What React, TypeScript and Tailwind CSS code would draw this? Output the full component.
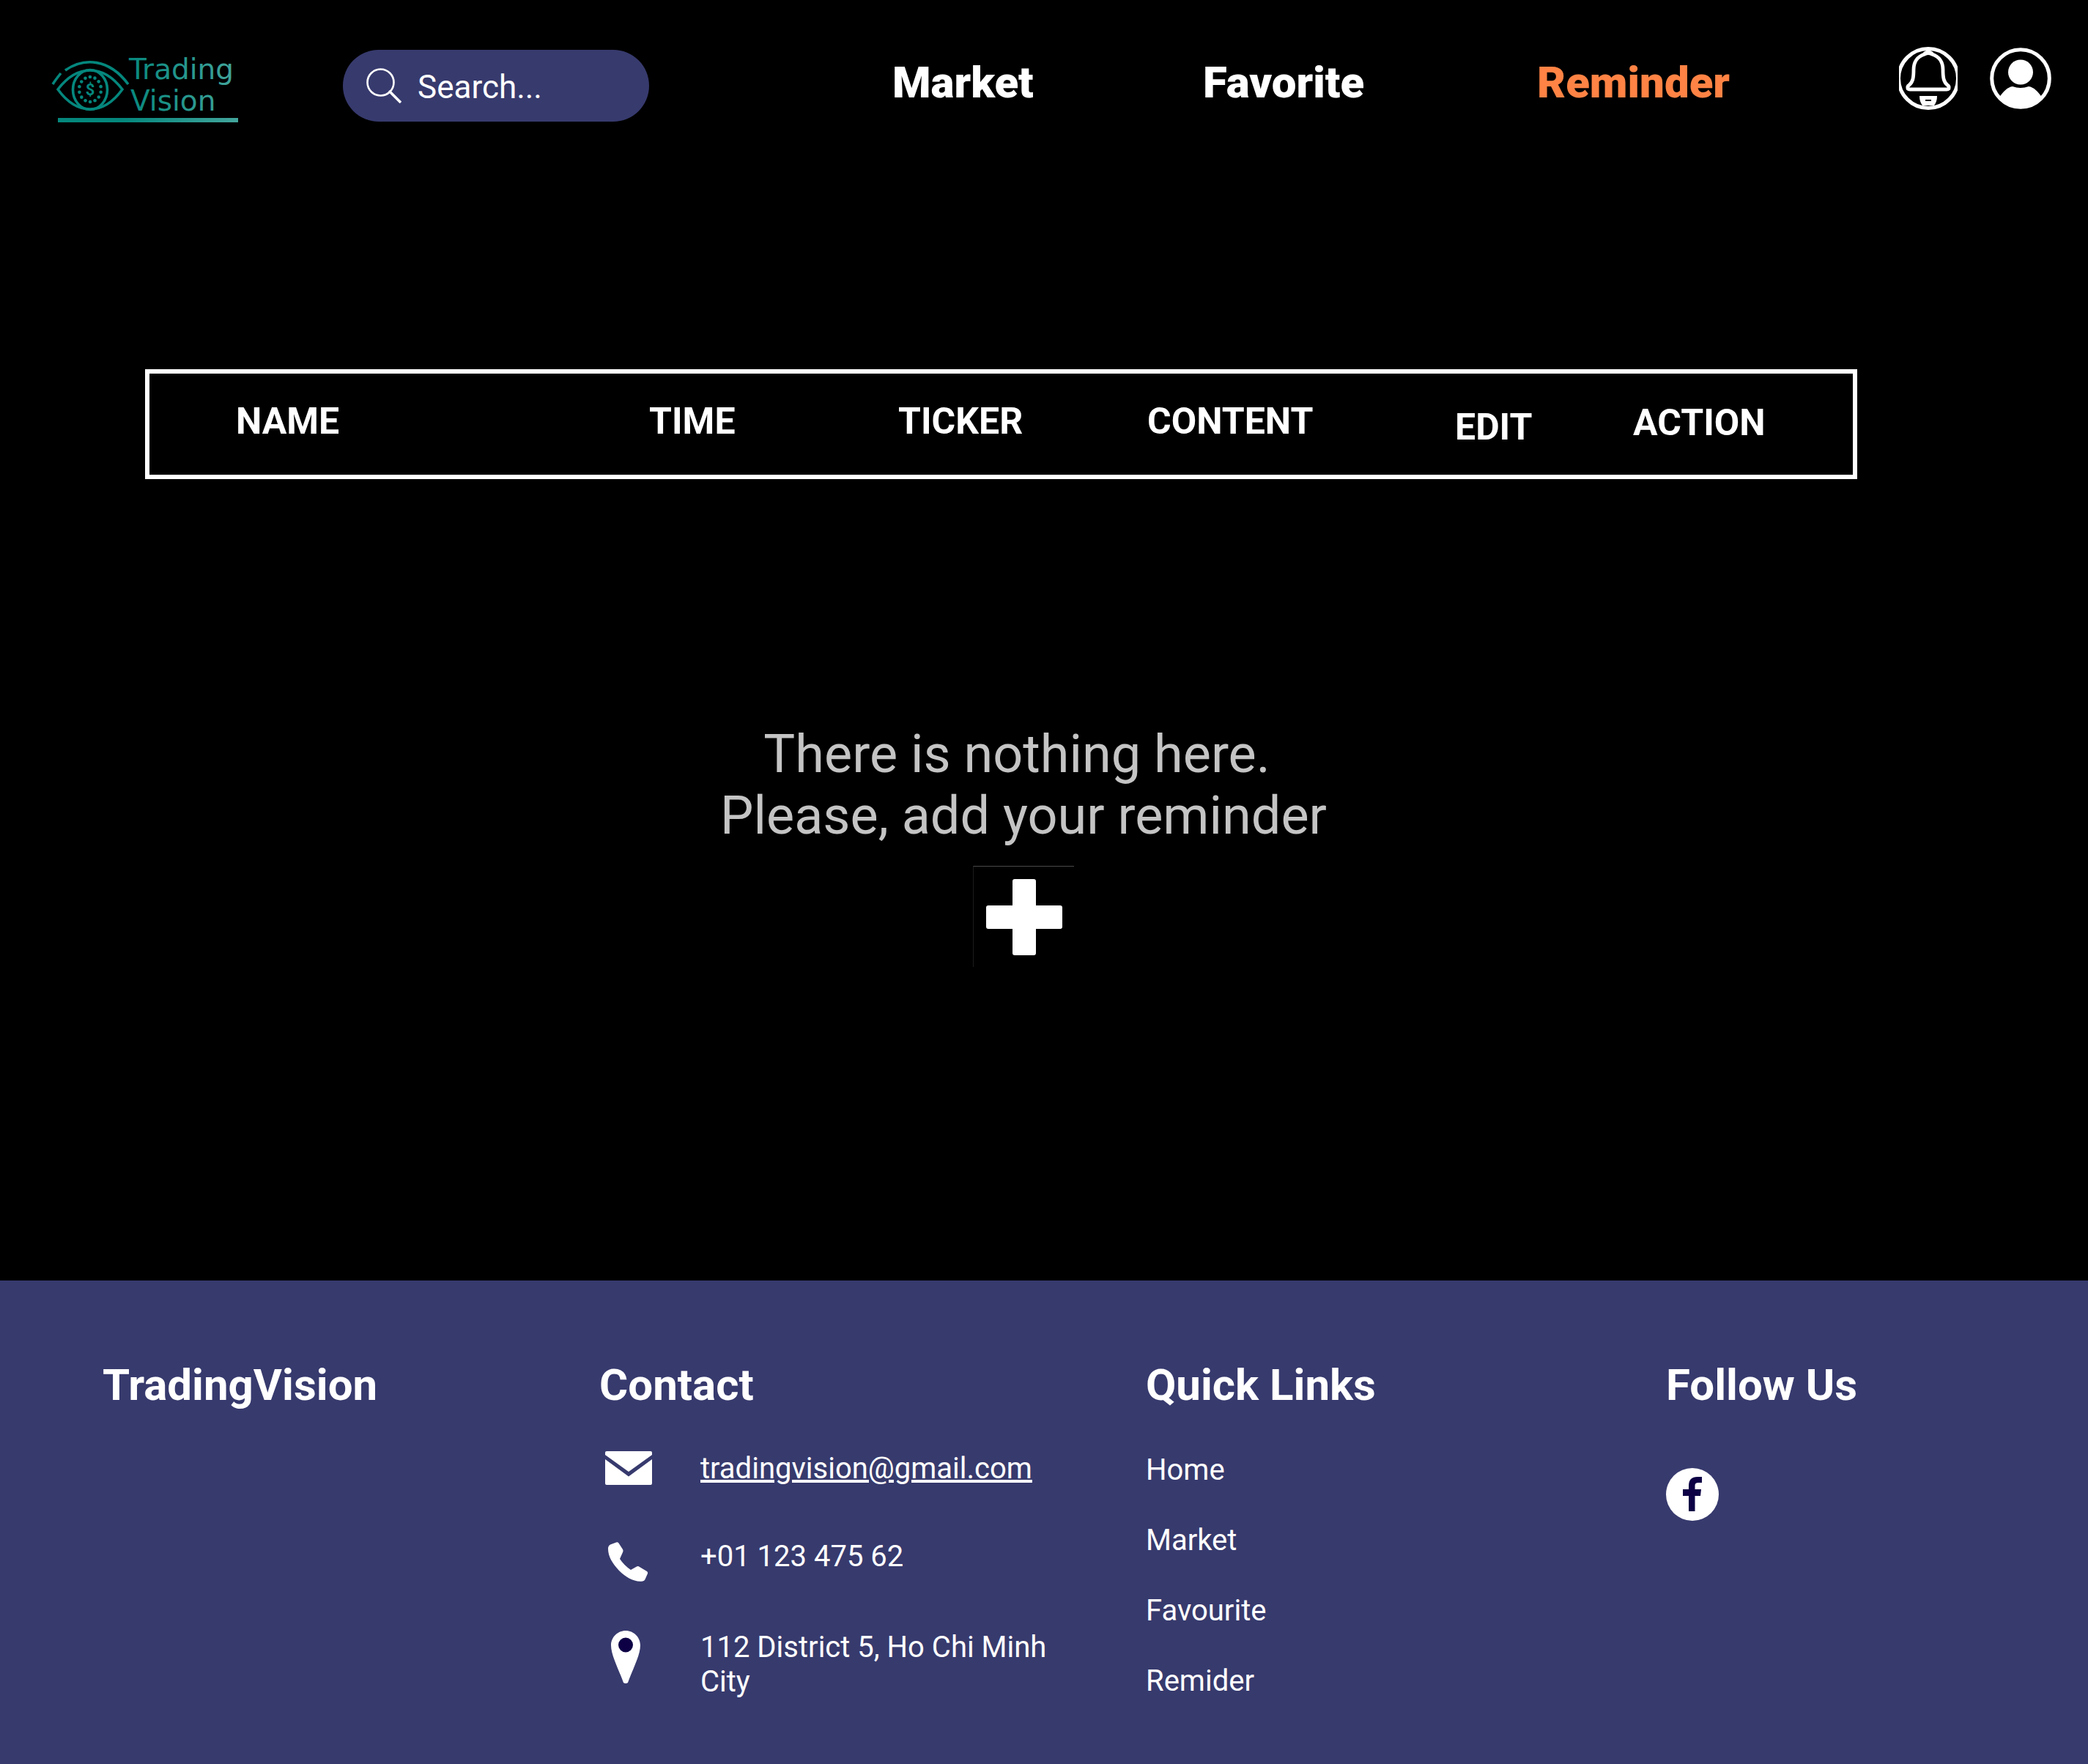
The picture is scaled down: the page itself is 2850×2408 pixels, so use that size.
import type { ReactNode } from "react";

const DOTS = Array.from({ length: 14 }, (_, i) => {
  const a = (i / 14) * Math.PI * 2 + 0.22;
  return { x: 53 + Math.cos(a) * 15, y: 42 + Math.sin(a) * 17 };
});

function Logo() {
  return (
    <svg width="256" height="104" viewBox="0 -12 256 104" fill="none" role="img" aria-label="Trading Vision">
      <defs>
        <linearGradient id="teal" gradientUnits="userSpaceOnUse" x1="100" y1="0" x2="256" y2="0">
          <stop offset="0" stopColor="#05877d" />
          <stop offset="1" stopColor="#43a59c" />
        </linearGradient>
      </defs>
      <g stroke="#05877d" strokeWidth="3.6">
        <path d="M19 16C45-2 79 0 105 35" />
        <path d="M2 35C5 30 9 25 13 20" />
        <path d="M9 42C22 25 36 16 53 16s31 9 44 26C84 60 70 69 53 69S22 60 9 42z" />
        <ellipse cx="53" cy="42.500" rx="23.500" ry="27" />
      </g>
      <g fill="#05877d">
        {DOTS.map((d, i) => (
          <circle key={i} cx={d.x} cy={d.y} r="2.300" />
        ))}
        <text x="53" y="50" textAnchor="middle" fontSize="22" fontWeight="700" fontFamily="Roboto, sans-serif">
          $
        </text>
      </g>
      <g fill="url(#teal)" fontFamily="'DejaVu Sans', sans-serif">
        <text x="106" y="28" fontSize="39">Trading</text>
        <text x="108" y="71" fontSize="39">Vision</text>
      </g>
      <rect x="9" y="81" width="246" height="6" fill="url(#teal)" />
    </svg>
  );
}

function SearchIcon() {
  return (
    <svg width="48" height="48" viewBox="0 0 48 48" fill="none" stroke="#fff" className="shrink-0" aria-hidden="true">
      <circle cx="19.500" cy="19.500" r="18" strokeWidth="2.600" />
      <path d="M31 31L47 47" strokeWidth="3.600" />
    </svg>
  );
}

function BellIcon() {
  return (
    <svg width="80" height="86" viewBox="0 0 80 86" fill="none" stroke="#fff" aria-hidden="true">
      <circle cx="40" cy="43" r="40.500" strokeWidth="5" />
      <path
        d="M35 10C25 13 20 21 20 31C20 42 19 48 14 52Q11 54 12 57Q13 58 15 58H65Q67 58 68 57Q69 54 66 52C61 48 60 42 60 31C60 21 55 13 45 10Q40 7 35 10z"
        strokeWidth="4.800"
      />
      <path d="M34 10Q40 4 46 10" strokeWidth="4.600" />
      <path d="M28 67h24q0 8-4 13H32q-4-5-4-13zM36 72v2h8v-2z" fill="#fff" fillRule="evenodd" stroke="none" />
    </svg>
  );
}

function UserIcon() {
  return (
    <svg width="84" height="84" viewBox="0 0 84 84" aria-hidden="true">
      <circle cx="42" cy="42" r="39.300" fill="none" stroke="#fff" strokeWidth="5" />
      <circle cx="42" cy="33.500" r="17" fill="#fff" />
      <path d="M13 68C18 60 24 54 31 53Q42 57 53 53C60 54 66 60 71 68C64 77 54 82 42 82S20 77 13 68z" fill="#fff" />
    </svg>
  );
}

function MailIcon() {
  return (
    <svg width="64" height="46" viewBox="0 0 64 46" fill="#fff" aria-hidden="true">
      <path d="M2 0h60q2 0 2 2v3L32 28 0 5V2q0-2 2-2z" />
      <path d="M0 11L32 34.500 64 11v33q0 2-2 2H2q-2 0-2-2z" />
    </svg>
  );
}

function PhoneIcon() {
  return (
    <svg width="64" height="58" viewBox="-4 -4 64 58" fill="#fff" aria-hidden="true">
      <path d="M11 .5Q13-.5 14.500 1.500L20 10Q21 12 20 14L16 23Q22 32 31 38L39 33.500Q41 32.500 43 34L53 40Q54.500 41 54 43L50.500 51Q49.500 53 47 53.500C36 55 24 48 15 39C6 29 0 20 0 9Q0 5 3 3.500z" />
    </svg>
  );
}

function PinIcon() {
  return (
    <svg width="56" height="73" viewBox="-8 -1 56 73" aria-hidden="true">
      <path d="M20 0C31 0 40 9 40 20C40 34 28 56 23 71Q20 73 17 71C12 56 0 34 0 20C0 9 9 0 20 0z" fill="#fff" />
      <circle cx="20" cy="19.500" r="10" fill="#0d0045" />
    </svg>
  );
}

function FacebookIcon() {
  return (
    <svg width="72" height="72" viewBox="0 0 72 72" aria-hidden="true">
      <circle cx="36" cy="36" r="36" fill="#fff" />
      <path d="M31 59V38h-8v-9h8v-5c0-8 4-12 12-12h6v8h-5c-3 0-4.500 1-4.500 4v5H48l-1 9h-7.500v21z" fill="#0d0045" />
    </svg>
  );
}

function PlusIcon() {
  return (
    <svg width="104" height="104" viewBox="0 0 104 104" fill="#fff" aria-hidden="true">
      <rect x="36" width="32" height="104" rx="3" />
      <rect y="36" width="104" height="32" rx="3" />
    </svg>
  );
}

function FooterHeading({ children }: { children: ReactNode }) {
  return <h2 className="text-[60px] leading-[70px] font-bold">{children}</h2>;
}

function ContactRow({ icon, children }: { icon: ReactNode; children: ReactNode }) {
  return (
    <li className="flex min-h-[54px] items-start">
      <span className="w-[138px] shrink-0 pl-2">{icon}</span>
      <span className="max-w-[500px]">{children}</span>
    </li>
  );
}

const COLUMNS = [
  { label: "NAME", pad: "pt-9" },
  { label: "TIME", pad: "pt-9" },
  { label: "TICKER", pad: "pt-9" },
  { label: "CONTENT", pad: "pt-9" },
  { label: "EDIT", pad: "pt-11" },
  { label: "ACTION", pad: "pt-[38px]" },
];

export default function App() {
  return (
    <div className="flex min-h-screen flex-col bg-black font-['Roboto',sans-serif] text-white">
      <header className="grid grid-cols-[398fr_750fr_424fr_456fr_494fr_258fr] items-start pl-[70px]">
        <a href="#home" className="pt-[68px]">
          <Logo />
        </a>
        <div className="pt-[68px]">
          <label className="flex h-[98px] w-[418px] items-center gap-[22px] rounded-full bg-[#373a6d] pr-8 pl-8">
            <SearchIcon />
            <input
              type="search"
              aria-label="Search"
              placeholder="Search..."
              className="w-full min-w-0 bg-transparent pt-1 text-[44px] leading-[53px] outline-none placeholder:text-white placeholder:opacity-100"
            />
          </label>
        </div>
        <a href="#market" className="pt-[78px] text-[60px] leading-[70px] font-black">Market</a>
        <a href="#favorite" className="pt-[78px] text-[60px] leading-[70px] font-black">Favorite</a>
        <a href="#reminder" className="pt-[78px] text-[60px] leading-[70px] font-black text-[#ff8344]">Reminder</a>
        <div className="flex items-center gap-11 pt-16">
          <button type="button" aria-label="Notifications">
            <BellIcon />
          </button>
          <button type="button" aria-label="Account">
            <UserIcon />
          </button>
        </div>
      </header>

      <main className="flex-1 pb-20">
        <table className="mt-[332px] ml-[198px] block w-[82%] border-6 border-white">
          <thead className="block">
            <tr className="grid h-[138px] grid-cols-[564fr_340fr_340fr_420fr_243fr_300fr] pl-[118px] text-left text-[50px] leading-[59px]">
              {COLUMNS.map((c) => (
                <th key={c.label} scope="col" className={`${c.pad} font-bold`}>
                  {c.label}
                </th>
              ))}
            </tr>
          </thead>
        </table>

        <div className="mt-[334px] flex flex-col items-center pr-14">
          <p className="text-center text-[72px] leading-[84px] text-[#c4c4c4]">
            There is nothing here.&nbsp;
            <br />
            Please, add your reminder
          </p>
          <button
            type="button"
            aria-label="Add reminder"
            className="mt-[26px] flex size-[138px] items-center justify-center border-t border-l border-t-[#4a4a4a] border-l-[#1c1c1c]"
          >
            <PlusIcon />
          </button>
        </div>
      </main>

      <footer className="grid grid-cols-[678fr_746fr_710fr_576fr] bg-[#373a6d] pt-[108px] pb-[89px] pl-[140px] text-[40px] leading-[47px]">
        <FooterHeading>TradingVision</FooterHeading>
        <section>
          <FooterHeading>Contact</FooterHeading>
          <ul className="mt-[55px] flex flex-col gap-[66px]">
            <ContactRow icon={<MailIcon />}>
              <a href="mailto:tradingvision@gmail.com" className="underline">
                tradingvision@gmail.com
              </a>
            </ContactRow>
            <ContactRow icon={<PhoneIcon />}>+01 123 475 62</ContactRow>
            <ContactRow icon={<PinIcon />}>112 District 5, Ho Chi Minh City</ContactRow>
          </ul>
        </section>
        <nav aria-label="Quick Links">
          <FooterHeading>Quick Links</FooterHeading>
          <ul className="mt-[57px] flex flex-col gap-[49px]">
            <li><a href="#home">Home</a></li>
            <li><a href="#market">Market</a></li>
            <li><a href="#favourite">Favourite</a></li>
            <li><a href="#reminder">Remider</a></li>
          </ul>
        </nav>
        <section>
          <FooterHeading>Follow Us</FooterHeading>
          <a href="#facebook" aria-label="Facebook" className="mt-[78px] inline-block">
            <FacebookIcon />
          </a>
        </section>
      </footer>
    </div>
  );
}
